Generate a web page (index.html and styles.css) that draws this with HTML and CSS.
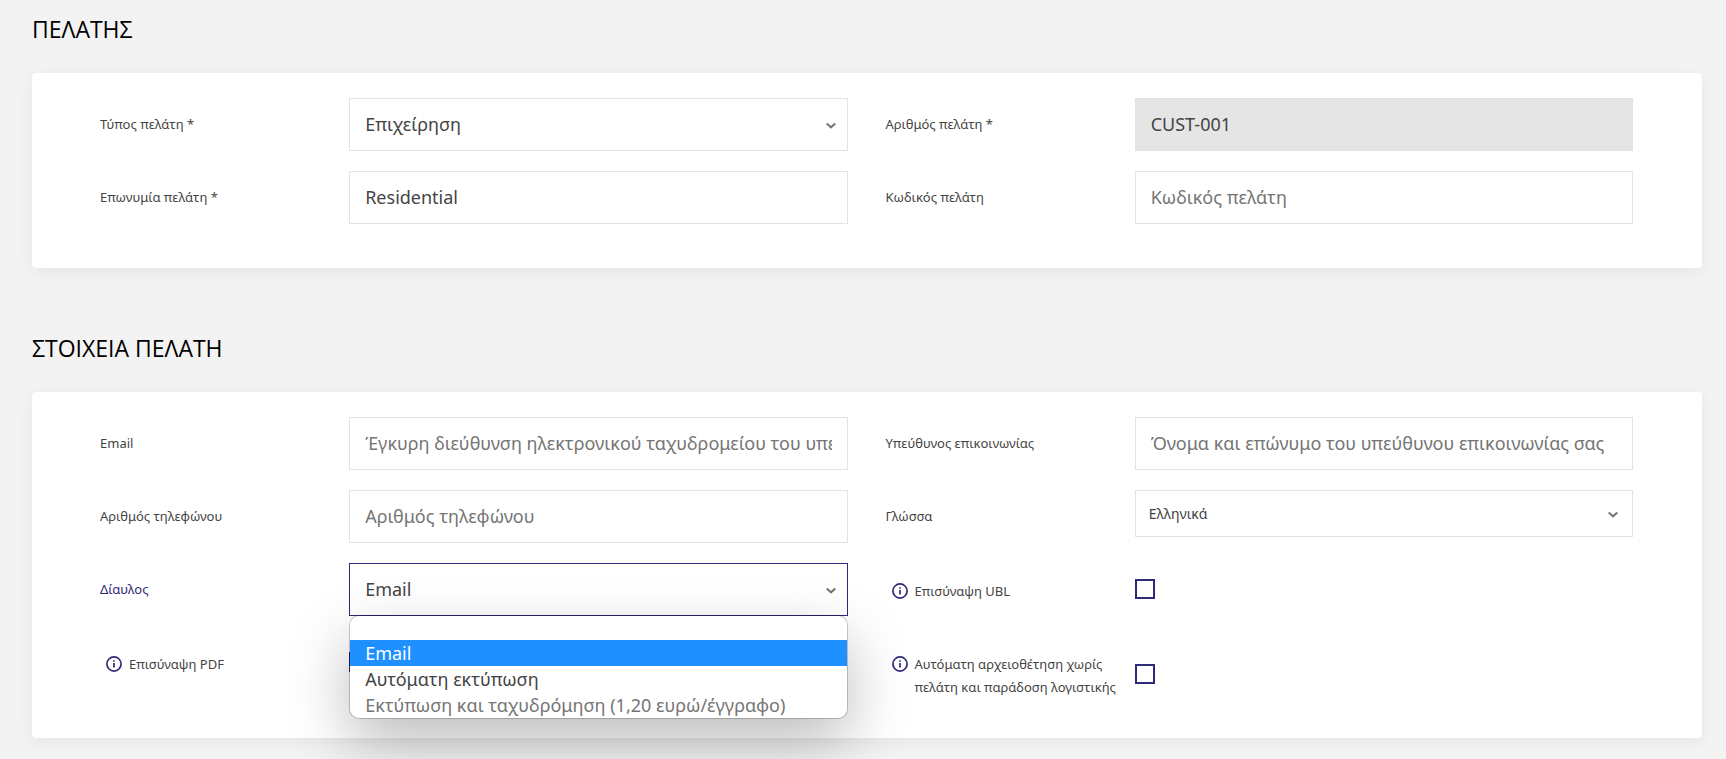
FILE: index.html
```html
<!DOCTYPE html>
<html lang="el">
<head>
    <meta charset="UTF-8">
    <meta name="viewport" content="width=device-width, initial-scale=1.0">
    <title>Πελάτης</title>
    <link rel="stylesheet" href="styles.css">
</head>
<body>
    <form class="customer-form">
        <section class="section">
            <h2>ΠΕΛΑΤΗΣ</h2>
            <div class="card">
                <div class="form-group">
                    <label for="customerType">Τύπος πελάτη *</label>
                    <div class="select-wrap">
                        <select id="customerType" name="customerType">
                            <option>Επιχείρηση</option>
                        </select>
                        <svg class="chevron" viewBox="0 0 10 8"><path d="M.7 1.5L5 5.3l4.3-3.8"/></svg>
                    </div>
                </div>
                <div class="form-group">
                    <label for="customerNumber">Αριθμός πελάτη *</label>
                    <input type="text" id="customerNumber" name="customerNumber" value="CUST-001" disabled>
                </div>
                <div class="form-group">
                    <label for="customerName">Επωνυμία πελάτη *</label>
                    <input type="text" id="customerName" name="customerName" value="Residential">
                </div>
                <div class="form-group">
                    <label for="customerCode">Κωδικός πελάτη</label>
                    <input type="text" id="customerCode" name="customerCode" placeholder="Κωδικός πελάτη">
                </div>
            </div>
        </section>

        <section class="section">
            <h2>ΣΤΟΙΧΕΙΑ ΠΕΛΑΤΗ</h2>
            <div class="card card-details">
                <div class="form-group">
                    <label for="email">Email</label>
                    <input type="text" id="email" name="email" placeholder="Έγκυρη διεύθυνση ηλεκτρονικού ταχυδρομείου του υπεύθυνου επικοινωνίας">
                </div>
                <div class="form-group">
                    <label for="contact">Υπεύθυνος επικοινωνίας</label>
                    <input type="text" id="contact" name="contact" placeholder="Όνομα και επώνυμο του υπεύθυνου επικοινωνίας σας">
                </div>
                <div class="form-group">
                    <label for="phone">Αριθμός τηλεφώνου</label>
                    <input type="text" id="phone" name="phone" placeholder="Αριθμός τηλεφώνου">
                </div>
                <div class="form-group">
                    <label for="language">Γλώσσα</label>
                    <div class="select-wrap small">
                        <select id="language" name="language">
                            <option>Ελληνικά</option>
                        </select>
                        <svg class="chevron" viewBox="0 0 10 8"><path d="M.7 1.5L5 5.3l4.3-3.8"/></svg>
                    </div>
                </div>
                <div class="form-group active">
                    <label for="channel">Δίαυλος</label>
                    <div class="select-wrap">
                        <select id="channel" name="channel">
                            <option>Email</option>
                        </select>
                        <svg class="chevron" viewBox="0 0 10 8"><path d="M.7 1.5L5 5.3l4.3-3.8"/></svg>
                        <ul class="options" role="listbox">
                            <li role="option" class="empty"></li>
                            <li role="option" class="selected" aria-selected="true">Email</li>
                            <li role="option">Αυτόματη εκτύπωση</li>
                            <li role="option" class="disabled" aria-disabled="true">Εκτύπωση και ταχυδρόμηση (1,20 ευρώ/έγγραφο)</li>
                        </ul>
                    </div>
                </div>
                <div class="form-group check-group">
                    <label for="attachUbl">
                        <svg class="info" viewBox="0 0 16 16"><circle cx="8" cy="8" r="7.1"/><path d="M8 7v4.6M8 4.2v1.6"/></svg>
                        <span>Επισύναψη UBL</span>
                    </label>
                    <input type="checkbox" id="attachUbl" name="attachUbl">
                </div>
                <div class="form-group check-group">
                    <label for="attachPdf">
                        <svg class="info" viewBox="0 0 16 16"><circle cx="8" cy="8" r="7.1"/><path d="M8 7v4.6M8 4.2v1.6"/></svg>
                        <span>Επισύναψη PDF</span>
                    </label>
                    <input type="checkbox" id="attachPdf" name="attachPdf">
                </div>
                <div class="form-group check-group">
                    <label for="autoArchive">
                        <svg class="info" viewBox="0 0 16 16"><circle cx="8" cy="8" r="7.1"/><path d="M8 7v4.6M8 4.2v1.6"/></svg>
                        <span>Αυτόματη αρχειοθέτηση χωρίς πελάτη και παράδοση λογιστικής</span>
                    </label>
                    <input type="checkbox" id="autoArchive" name="autoArchive">
                </div>
            </div>
        </section>
    </form>
</body>
</html>
```
FILE: styles.css
```css
* {
    box-sizing: border-box;
}
body {
    font-family: "Noto Sans", "Open Sans", sans-serif;
    font-size: 14px;
    line-height: 23px;
    color: #444;
    background-color: #f3f3f3;
    margin: 0;
    padding: 12px 24px 0 32px;
    min-height: 100vh;
}
.section {
    margin-bottom: 63px;
}
.section:last-child {
    margin-bottom: 0;
}
h2 {
    margin: 0 0 27px;
    font-family: "Open Sans", "Noto Sans", sans-serif;
    font-size: 23px;
    font-weight: 400;
    line-height: 34px;
    color: #000;
}
.card {
    display: grid;
    grid-template-columns: 1fr 1fr;
    align-items: start;
    gap: 20px 38px;
    padding: 25px 69px 44px 68px;
    background: white;
    border-radius: 4px;
    box-shadow: 0 4px 16px rgba(0, 0, 0, 0.06);
}
.card-details {
    padding-bottom: 27px;
}
.form-group {
    display: grid;
    grid-template-columns: minmax(0, 1fr) minmax(0, 2fr);
    min-height: 53px;
}
label {
    padding-top: 15px;
    font-size: 13px;
}
input[type="text"], select {
    display: block;
    width: 100%;
    height: 53px;
    padding: 0 15px 2px;
    border: 1px solid #e3e3e3;
    border-radius: 0;
    background: white;
    color: #444;
    font-family: inherit;
    font-size: 18px;
    appearance: none;
    outline: none;
}
input[type="text"]:disabled {
    background: #e5e5e5;
    opacity: 1;
}
input::placeholder {
    color: #757575;
}
.select-wrap {
    position: relative;
}
.chevron {
    position: absolute;
    top: 24px;
    right: 12px;
    width: 10px;
    height: 8px;
    fill: none;
    stroke: #757575;
    stroke-width: 2;
}
.small select {
    height: 47px;
    padding: 0 13px;
    font-size: 14px;
}
.small .chevron {
    top: 21px;
    right: 15px;
}
.active label {
    color: #2e2a78;
}
.active select {
    border-color: #2e2a78;
}
.options {
    position: absolute;
    top: 52px;
    left: 0;
    right: 0;
    z-index: 1;
    margin: 0;
    padding: 0;
    list-style: none;
    overflow: hidden;
    background: white;
    background-clip: padding-box;
    border: 1px solid rgba(0, 0, 0, 0.2);
    border-radius: 10px;
    box-shadow: 0 24px 60px rgba(0, 0, 0, 0.26);
    font-size: 18px;
    line-height: 26px;
}
.options li {
    height: 26px;
    padding: 0 15px;
}
.options .empty {
    height: 24px;
}
.options .selected {
    background: #1e90ff;
    color: white;
}
.options .disabled {
    color: #757575;
}
.check-group {
    align-items: center;
    min-height: 0;
}
.check-group label {
    display: flex;
    align-items: flex-start;
    gap: 7px;
    padding: 17px 0 12px 6px;
}
.info {
    flex: none;
    width: 16px;
    height: 16px;
    margin-top: 3px;
    fill: none;
    stroke: #2e2a78;
    stroke-width: 1.7;
}
input[type="checkbox"] {
    width: 20px;
    height: 20px;
    margin: 0;
    border: 2px solid #2e2a78;
    background: white;
    appearance: none;
}
```
